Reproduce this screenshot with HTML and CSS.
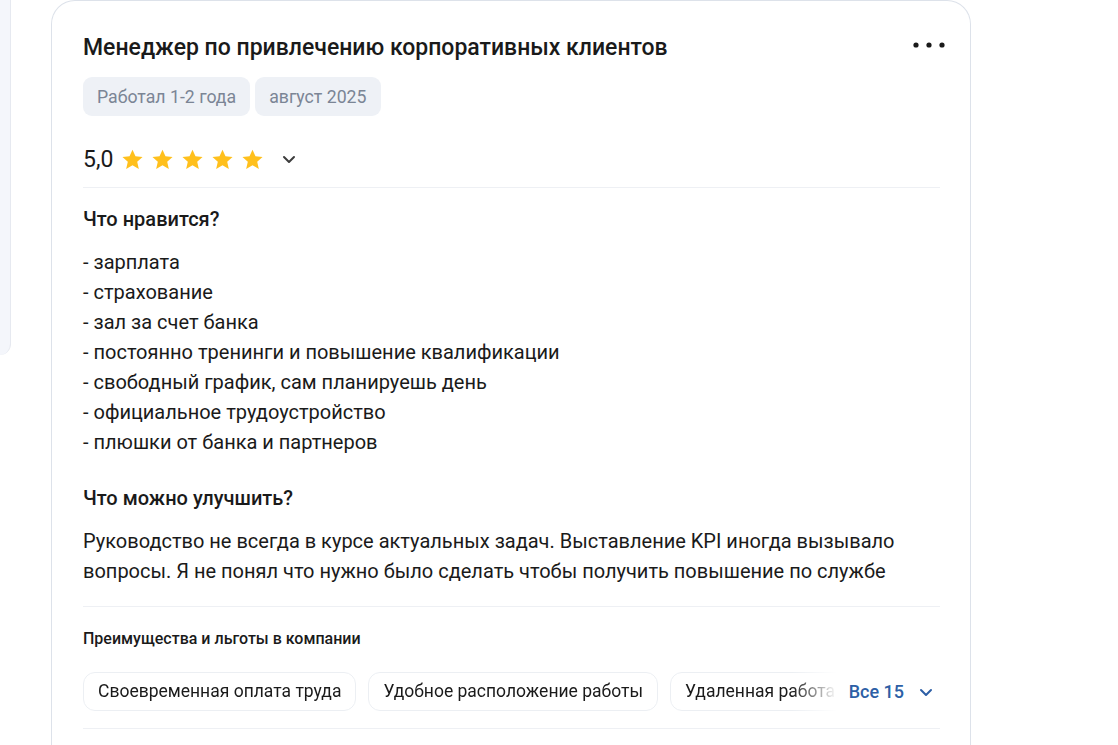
FILE: index.html
```html
<!DOCTYPE html>
<html lang="ru">
<head>
    <meta charset="UTF-8">
    <meta name="viewport" content="width=device-width, initial-scale=1.0">
    <title>Отзыв</title>
    <link rel="stylesheet" href="styles.css">
</head>
<body>

<div class="page">
    <div class="side-panel"></div>

    <div class="review-card">
        <!-- Header -->
        <div class="review-header">
            <h2 class="review-title">Менеджер по привлечению корпоративных клиентов</h2>
            <button type="button" class="more-btn" aria-label="Ещё">
                <svg width="32" height="8" viewBox="0 0 32 8">
                    <circle cx="3" cy="4" r="2.6" fill="#1a1a1a"/>
                    <circle cx="16" cy="4" r="2.6" fill="#1a1a1a"/>
                    <circle cx="29" cy="4" r="2.6" fill="#1a1a1a"/>
                </svg>
            </button>
        </div>

        <div class="tags">
            <span class="tag">Работал 1-2 года</span>
            <span class="tag">август 2025</span>
        </div>

        <!-- Rating -->
        <div class="rating">
            <span class="rating-value">5,0</span>
            <div class="stars">
                <svg class="star" viewBox="0 0 24 24"><path d="M12 1.8l3.1 6.9 7.4.7-5.6 5 1.7 7.4L12 17.9l-6.6 3.9 1.7-7.4-5.6-5 7.4-.7z"/></svg>
                <svg class="star" viewBox="0 0 24 24"><path d="M12 1.8l3.1 6.9 7.4.7-5.6 5 1.7 7.4L12 17.9l-6.6 3.9 1.7-7.4-5.6-5 7.4-.7z"/></svg>
                <svg class="star" viewBox="0 0 24 24"><path d="M12 1.8l3.1 6.9 7.4.7-5.6 5 1.7 7.4L12 17.9l-6.6 3.9 1.7-7.4-5.6-5 7.4-.7z"/></svg>
                <svg class="star" viewBox="0 0 24 24"><path d="M12 1.8l3.1 6.9 7.4.7-5.6 5 1.7 7.4L12 17.9l-6.6 3.9 1.7-7.4-5.6-5 7.4-.7z"/></svg>
                <svg class="star" viewBox="0 0 24 24"><path d="M12 1.8l3.1 6.9 7.4.7-5.6 5 1.7 7.4L12 17.9l-6.6 3.9 1.7-7.4-5.6-5 7.4-.7z"/></svg>
            </div>
            <svg class="chevron" width="16" height="16" viewBox="0 0 16 16">
                <polyline points="3,6 8,11 13,6" fill="none" stroke="#3d3d3d" stroke-width="2" stroke-linecap="round" stroke-linejoin="round"/>
            </svg>
        </div>

        <div class="divider"></div>

        <!-- Pros -->
        <h3 class="section-title">Что нравится?</h3>
        <p class="section-text">- зарплата<br>- страхование<br>- зал за счет банка<br>- постоянно тренинги и повышение квалификации<br>- свободный график, сам планируешь день<br>- официальное трудоустройство<br>- плюшки от банка и партнеров</p>

        <!-- Cons -->
        <h3 class="section-title section-gap">Что можно улучшить?</h3>
        <p class="section-text">Руководство не всегда в курсе актуальных задач. Выставление KPI иногда вызывало вопросы. Я не понял что нужно было сделать чтобы получить повышение по службе</p>

        <div class="divider divider-bottom"></div>

        <!-- Benefits -->
        <h4 class="benefits-title">Преимущества и льготы в компании</h4>
        <div class="benefits">
            <div class="chips">
                <span class="chip">Своевременная оплата труда</span>
                <span class="chip">Удобное расположение работы</span>
                <span class="chip">Удаленная работа</span>
            </div>
            <button type="button" class="all-btn">
                Все 15
                <svg width="16" height="16" viewBox="0 0 16 16">
                    <polyline points="3,6 8,11 13,6" fill="none" stroke="#2d5fa6" stroke-width="2" stroke-linecap="round" stroke-linejoin="round"/>
                </svg>
            </button>
        </div>

        <div class="divider divider-last"></div>
    </div>
</div>

</body>
</html>
```

FILE: styles.css
```css
body {
    font-family: 'Roboto', 'Noto Sans', sans-serif;
    margin: 0;
    background-color: #fff;
    color: #1a1a1a;
    overflow: hidden;
}

.page {
    display: flex;
    align-items: flex-start;
    height: 745px;
}

/* Card cut off on the left edge */
.side-panel {
    width: 10px;
    height: 355px;
    flex-shrink: 0;
    background-color: #f4f6fb;
    border-right: 1px solid #e6e9f0;
    border-bottom-right-radius: 24px;
}

.review-card {
    box-sizing: border-box;
    width: 920px;
    min-height: 800px;
    margin-left: 40px;
    padding: 32px 30px 0 31px;
    border: 1px solid #dde2ea;
    border-bottom: none;
    border-radius: 24px 24px 0 0;
    flex-shrink: 0;
}

.review-header {
    display: flex;
    justify-content: space-between;
    align-items: center;
}

.review-title {
    margin: 0;
    font-size: 23px;
    line-height: 30px;
    font-weight: 500;
}

.more-btn {
    background: none;
    border: none;
    padding: 0;
    margin-top: -6px;
    margin-right: -5px;
    cursor: pointer;
    display: flex;
}

.tags {
    display: flex;
    gap: 5px;
    margin-top: 14px;
}

.tag {
    background-color: #eef1f6;
    color: #7b8595;
    font-size: 17.7px;
    line-height: 37px;
    padding: 2px 14px 0;
    border-radius: 9px;
}

.rating {
    display: flex;
    align-items: center;
    height: 28px;
    margin-top: 29px;
}

.rating-value {
    font-size: 23px;
    margin-right: 8px;
}

.stars {
    display: flex;
    gap: 7px;
}

.star {
    width: 23px;
    height: 23px;
    fill: #ffc01d;
}

.chevron {
    margin-left: 17px;
}

.divider {
    height: 1px;
    background-color: #eef0f4;
    margin-top: 14px;
}

.section-title {
    margin: 19px 0 0;
    font-size: 20px;
    line-height: 24px;
    font-weight: 500;
}

.section-gap {
    margin-top: 29px;
}

.section-text {
    margin: 16px 0 0;
    font-size: 20px;
    line-height: 30px;
}

.divider-bottom {
    margin-top: 20px;
}

.benefits-title {
    margin: 21px 0 0;
    font-size: 16px;
    line-height: 22px;
    font-weight: 500;
}

.benefits {
    display: flex;
    align-items: center;
    margin-top: 22px;
}

.chips {
    flex: 1;
    display: flex;
    gap: 12px;
    overflow: hidden;
    -webkit-mask-image: linear-gradient(to right, #000 calc(100% - 45px), transparent);
    mask-image: linear-gradient(to right, #000 calc(100% - 45px), transparent);
}

.chip {
    flex-shrink: 0;
    font-size: 17.5px;
    line-height: 37px;
    padding: 0 14px;
    border: 1px solid #eceff3;
    border-radius: 12px;
}

.all-btn {
    display: flex;
    align-items: center;
    gap: 14px;
    margin-left: 12px;
    background: none;
    border: none;
    padding: 0 6px 0 0;
    font-family: inherit;
    font-size: 18px;
    font-weight: 500;
    color: #2d5fa6;
    cursor: pointer;
}

.divider-last {
    margin-top: 17px;
}
```
